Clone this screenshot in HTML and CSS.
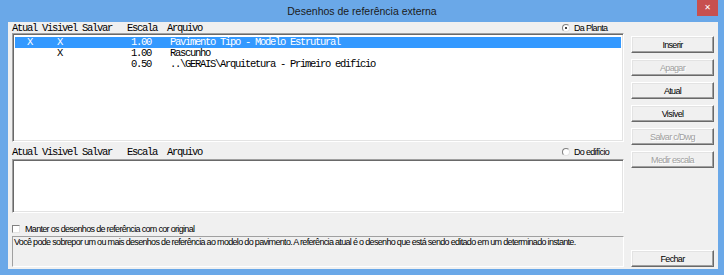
FILE: index.html
```html
<!DOCTYPE html>
<html lang="pt">
<head>
  <meta charset="UTF-8" />
  <title>Desenhos de referência externa</title>
  <link rel="stylesheet" href="styles.css">
</head>
<body>
  <div class="window">
    <div class="titlebar">
      <span></span>
      <span class="title">Desenhos de referência externa</span>
      <span class="closeBtn">&#x2715;</span>
    </div>

    <div class="client">
      <div class="main">
        <div class="listHead first">
          <span class="cols">Atual Visivel Salvar   Escala  Arquivo</span>
          <label class="radio"><span class="dot on"></span>Da Planta</label>
        </div>
        <div class="listbox topList">
          <div class="row selected"><span>X</span><span>X</span><span>1.00</span><span>Pavimento Tipo - Modelo Estrutural</span></div>
          <div class="row"><span></span><span>X</span><span>1.00</span><span>Rascunho</span></div>
          <div class="row"><span></span><span></span><span>0.50</span><span>..\GERAIS\Arquitetura - Primeiro edifício</span></div>
        </div>

        <div class="listHead second">
          <span class="cols">Atual Visivel Salvar   Escala  Arquivo</span>
          <label class="radio"><span class="dot"></span>Do edifício</label>
        </div>
        <div class="listbox bottomList"></div>

        <label class="check"><span class="box"></span>Manter os desenhos de referência com cor original</label>
        <div class="hint">Você pode sobrepor um ou mais desenhos de referência ao modelo do pavimento. A referência atual é o desenho que está sendo editado em um determinado instante.</div>
      </div>

      <div class="buttons">
        <button>Inserir</button>
        <button disabled>Apagar</button>
        <button>Atual</button>
        <button>Visível</button>
        <button disabled>Salvar c/Dwg</button>
        <button disabled>Medir escala</button>
        <button class="closeDlg">Fechar</button>
      </div>
    </div>
  </div>
</body>
</html>
```

FILE: styles.css
```css
body {
  margin: 0;
  font-family: 'Liberation Sans', sans-serif;
  font-size: 9px;
  letter-spacing: -0.68px;
  color: #000;
  background: #6aa8e8;
}
.window {
  width: 724px;
  height: 275px;
  box-sizing: border-box;
  background: #6aa8e8;
  padding: 0 6px 6px 8px;
  display: flex;
  flex-direction: column;
}
.titlebar {
  height: 22px;
  display: grid;
  grid-template-columns: 1fr auto 1fr;
  align-items: start;
  margin-left: -8px;
  margin-right: -6px;
}
.title {
  font-size: 10.5px;
  letter-spacing: 0;
  line-height: 22px;
  color: #1b1b1b;
}
.closeBtn {
  justify-self: end;
  width: 21px;
  height: 16px;
  margin-right: 6px;
  background: #c7504f;
  color: #fff;
  font-family: 'DejaVu Sans', sans-serif;
  font-size: 8px;
  letter-spacing: 0;
  line-height: 16px;
  text-align: center;
}
.client {
  flex: 1;
  background: #f0f0f0;
  display: flex;
  padding: 0 4px 2px 4px;
  gap: 7px;
}
.main {
  width: 612px;
  display: flex;
  flex-direction: column;
}
.listHead {
  height: 10px;
  display: flex;
  justify-content: space-between;
  align-items: center;
}
.listHead.first { margin-top: 1px; }
.listHead.second { margin-top: 5px; }
.cols {
  font-family: 'Liberation Mono', monospace;
  font-size: 10.5px;
  letter-spacing: -1.3px;
  white-space: pre;
  line-height: 10px;
}
.radio {
  width: 62px;
  display: flex;
  align-items: center;
  gap: 4px;
  white-space: nowrap;
}
.dot {
  width: 6px;
  height: 6px;
  border: 1px solid;
  border-color: #808080 #e3e3e3 #e3e3e3 #808080;
  border-radius: 50%;
  background: #fff;
  display: flex;
  align-items: center;
  justify-content: center;
}
.dot.on::after {
  content: '';
  width: 2px;
  height: 2px;
  border-radius: 50%;
  background: #000;
}
.listbox {
  background: #fff;
  border: 1px solid;
  border-color: #a0a0a0 #fff #fff #a0a0a0;
  box-shadow: inset 1px 1px #696969, inset -1px -1px #e3e3e3;
  padding: 2px 2px;
  box-sizing: border-box;
}
.topList { height: 109px; }
.bottomList { height: 54px; margin-top: 2px; }
.row {
  display: grid;
  grid-template-columns: 30px 74px 39px 1fr;
  padding-left: 12px;
  height: 11px;
  line-height: 11px;
  font-family: 'Liberation Mono', monospace;
  font-size: 10.5px;
  letter-spacing: -1.3px;
  white-space: pre;
}
.row:first-child { margin-top: 1px; }
.selected { background: #3399ff; color: #fff; }
.check {
  display: flex;
  align-items: center;
  gap: 5px;
  height: 11px;
  margin-top: 10px;
}
.box {
  width: 6px;
  height: 6px;
  background: #fff;
  border: 1px solid;
  border-color: #808080 #e3e3e3 #e3e3e3 #808080;
}
.hint {
  height: 31px;
  box-sizing: border-box;
  margin-top: 2px;
  border: 1px solid;
  border-color: #a0a0a0 #fff #fff #a0a0a0;
  padding: 0 1px;
  line-height: 11px;
  white-space: nowrap;
  overflow: hidden;
}
.buttons {
  width: 83px;
  display: flex;
  flex-direction: column;
  gap: 6px;
  padding-top: 14px;
}
button {
  height: 17px;
  padding: 0;
  background: #f0f0f0;
  font-family: inherit;
  font-size: 9px;
  letter-spacing: inherit;
  color: #000;
  border: 1px solid;
  border-color: #fff #696969 #696969 #fff;
  box-shadow: inset -1px -1px #a0a0a0, inset 1px 1px #e3e3e3;
}
button:disabled {
  color: #a0a0a0;
  text-shadow: 1px 1px #fff;
}
.closeDlg { margin-top: auto; }
```
